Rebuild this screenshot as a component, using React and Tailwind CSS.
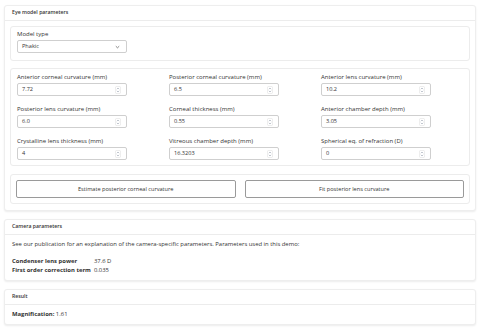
import React from 'react';

const params = [
  ['Anterior corneal curvature (mm)', '7.72'],
  ['Posterior corneal curvature (mm)', '6.5'],
  ['Anterior lens curvature (mm)', '10.2'],
  ['Posterior lens curvature (mm)', '6.0'],
  ['Corneal thickness (mm)', '0.55'],
  ['Anterior chamber depth (mm)', '3.05'],
  ['Crystalline lens thickness (mm)', '4'],
  ['Vitreous chamber depth (mm)', '16.3203'],
  ['Spherical eq. of refraction (D)', '0'],
];

function Spinner() {
  return (
    <svg width="6" height="8" viewBox="0 0 6 8" className="text-gray-400">
      <rect x="0.5" y="0.5" width="5" height="7" rx="1" fill="none" stroke="#e2e2e2" strokeWidth="0.6" />
      <path d="M1.8 3.2 L3 2 L4.2 3.2 M1.8 4.8 L3 6 L4.2 4.8" fill="none" stroke="currentColor" strokeWidth="0.6" />
    </svg>
  );
}

function NumberField({ label, value }) {
  return (
    <div className="flex flex-col gap-[2px] w-[152px]">
      <label className="text-[6px] leading-[7px] text-[#333]">{label}</label>
      <div className="w-[110px] h-[13px] border border-[#cfcfcf] rounded-[2px] bg-white flex items-center justify-between pl-[4px] pr-[5px]">
        <span className="text-[5.6px] text-[#333]">{value}</span>
        <Spinner />
      </div>
    </div>
  );
}

function Card({ title, children }) {
  return (
    <div className="bg-white rounded-[3px] border border-[#eeeeee] shadow-[0_1px_2px_rgba(0,0,0,0.08)]">
      <div className="h-[15px] flex items-center px-[7px] border-b border-[#ececec] text-[5.2px] font-semibold text-[#333]">
        {title}
      </div>
      {children}
    </div>
  );
}

export default function App() {
  return (
    <div className="w-[480px] h-[332px] bg-white px-[4px] pt-[5px] flex flex-col gap-[8px] text-[#222]" style={{ fontFamily: '"Open Sans", "Liberation Sans", sans-serif' }}>
      <Card title="Eye model parameters">
        <div className="flex flex-col px-[5px] pt-[5px] pb-[6px]">
          <div className="border border-[#ececec] rounded-[3px] px-[6px] pt-[4px] pb-[7px] flex flex-col gap-[2px]">
            <label className="text-[6px] leading-[7px] text-[#333]">Model type</label>
            <div className="w-[110px] h-[13px] border border-[#cfcfcf] rounded-[2px] flex items-center justify-between pl-[4px] pr-[6px]">
              <span className="text-[5.6px] text-[#333]">Phakic</span>
              <svg width="5" height="4" viewBox="0 0 5 4">
                <path d="M0.8 1.2 L2.5 2.8 L4.2 1.2" fill="none" stroke="#555" strokeWidth="0.7" />
              </svg>
            </div>
          </div>
          <div className="mt-[7px] border border-[#ececec] rounded-[3px] px-[6px] pt-[5px] pb-[5px] grid grid-cols-[152px_152px_152px] gap-y-[10px]">
            {params.map(([l, v]) => (
              <NumberField key={l} label={l} value={v} />
            ))}
          </div>
          <div className="mt-[8px] border border-[#ececec] rounded-[3px] p-[5px] flex gap-[9px]">
            <button className="flex-1 h-[18px] border border-[#9a9a9a] rounded-[2px] text-[5.6px] text-[#333] bg-white">
              Estimate posterior corneal curvature
            </button>
            <button className="flex-1 h-[18px] border border-[#9a9a9a] rounded-[2px] text-[5.6px] text-[#333] bg-white">
              Fit posterior lens curvature
            </button>
          </div>
        </div>
      </Card>

      <Card title="Camera parameters">
        <div className="px-[7px] pt-[6px] pb-[5px] text-[5.9px] text-[#333]">
          <p className="leading-[7px]">See our publication for an explanation of the camera-specific parameters. Parameters used in this demo:</p>
          <table className="mt-[9px] leading-[9px]">
            <tbody>
              <tr>
                <td className="font-bold pr-[3px]">Condenser lens power</td>
                <td>37.6 D</td>
              </tr>
              <tr>
                <td className="font-bold pr-[3px]">First order correction term</td>
                <td>0.035</td>
              </tr>
            </tbody>
          </table>
        </div>
      </Card>

      <Card title="Result">
        <div className="px-[7px] pt-[6px] pb-[6px] text-[5.9px] leading-[7px] text-[#333]">
          <span className="font-bold">Magnification:</span> 1.61
        </div>
      </Card>
    </div>
  );
}
